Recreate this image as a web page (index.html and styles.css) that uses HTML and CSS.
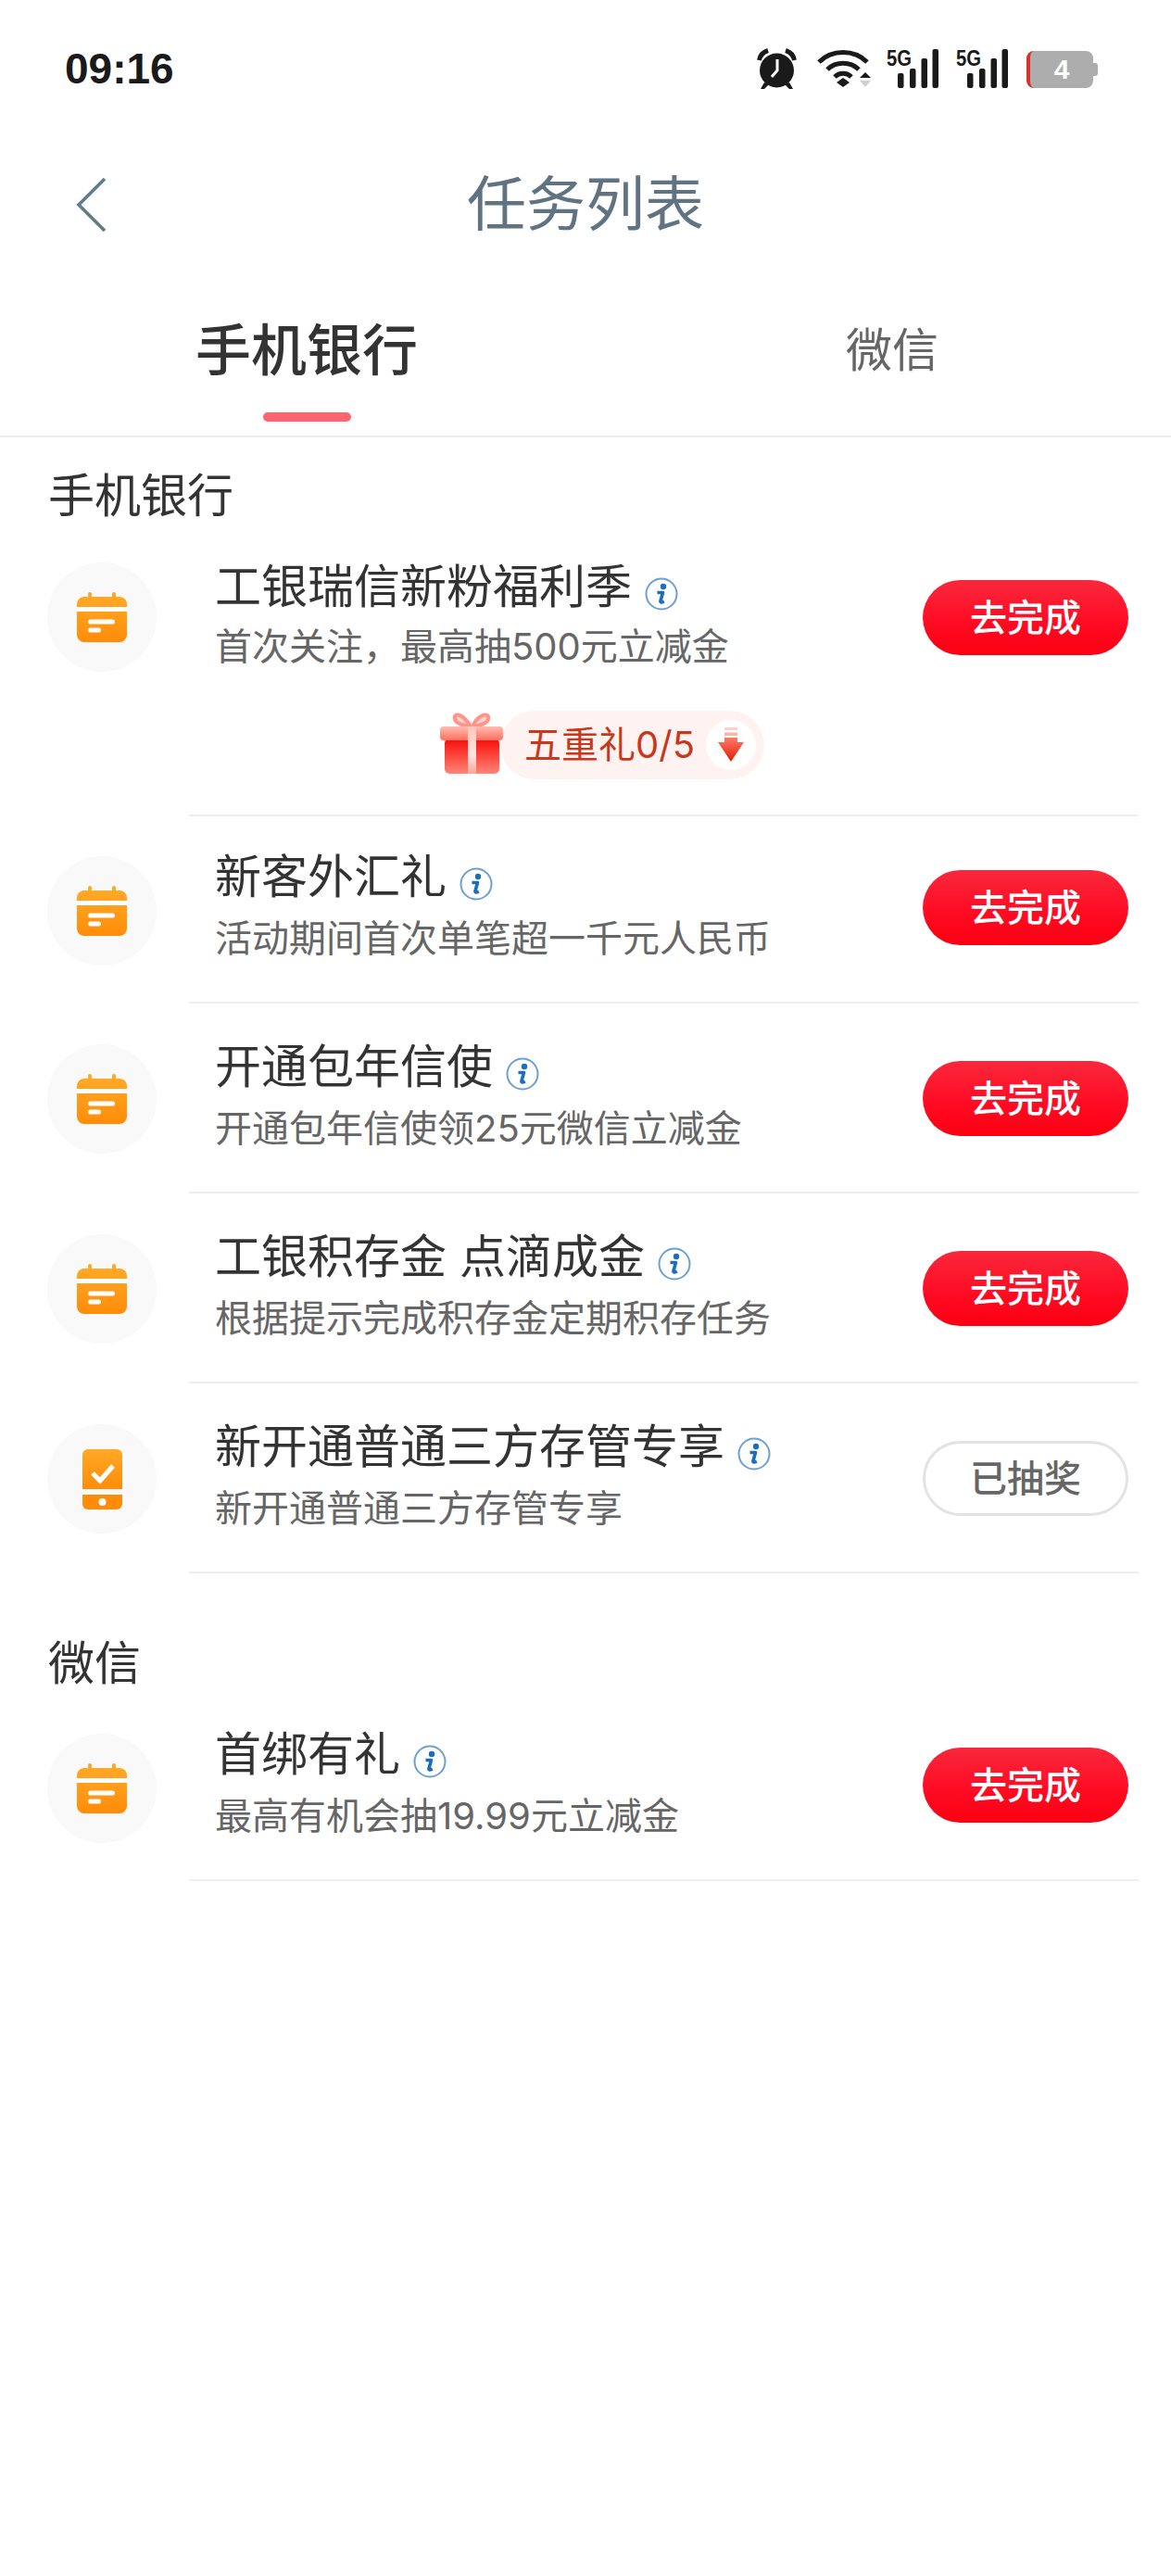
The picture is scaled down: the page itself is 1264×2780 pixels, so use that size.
FILE: index.html
```html
<!DOCTYPE html>
<html lang="zh-CN">
<head>
    <meta charset="UTF-8">
    <meta name="viewport" content="width=device-width, initial-scale=1.0">
    <title>任务列表</title>
    <link rel="stylesheet" href="styles.css">
</head>
<body>
    <!-- shared icons -->
    <svg class="defs" width="0" height="0" aria-hidden="true">
        <defs>
            <linearGradient id="orange" x1="0" y1="0" x2="0" y2="1">
                <stop offset="0" stop-color="#ffa927"/>
                <stop offset="1" stop-color="#ff8c08"/>
            </linearGradient>
            <linearGradient id="giftRed" x1="0" y1="0" x2="0" y2="1">
                <stop offset="0" stop-color="#f80c08"/>
                <stop offset="1" stop-color="#ff8576"/>
            </linearGradient>
            <linearGradient id="giftLid" x1="0" y1="0" x2="0" y2="1">
                <stop offset="0" stop-color="#ffbcb0"/>
                <stop offset="1" stop-color="#ff6f60"/>
            </linearGradient>
            <linearGradient id="giftRibbon" x1="0" y1="0" x2="0" y2="1">
                <stop offset="0" stop-color="#ffc4ba"/>
                <stop offset="0.6" stop-color="#ffe6e1"/>
                <stop offset="1" stop-color="#ffa497"/>
            </linearGradient>
            <linearGradient id="arrowRed" x1="0" y1="0" x2="0" y2="1">
                <stop offset="0" stop-color="#ff7a64"/>
                <stop offset="1" stop-color="#e01c06"/>
            </linearGradient>
            <symbol id="calendar" viewBox="0 0 54 54">
                <rect x="12" y="0" width="4" height="8" rx="2" fill="#ffa927"/>
                <rect x="38" y="0" width="4" height="8" rx="2" fill="#ffa927"/>
                <rect x="0" y="5" width="54" height="49" rx="8" fill="url(#orange)"/>
                <rect x="0" y="16" width="54" height="5" fill="#fff"/>
                <rect x="12" y="29.5" width="29" height="5" rx="2.5" fill="#fff"/>
                <rect x="12" y="38.5" width="14" height="5" rx="2.5" fill="#fff"/>
            </symbol>
            <symbol id="phone" viewBox="0 0 43 65">
                <path d="M6 0h31a6 6 0 0 1 6 6v37H0V6a6 6 0 0 1 6-6z" fill="url(#orange)"/>
                <path d="M0 49h43v10a6 6 0 0 1-6 6H6a6 6 0 0 1-6-6z" fill="#ff8c08"/>
                <circle cx="21.5" cy="57" r="4" fill="#fff"/>
                <polyline points="11,26 19,34 33,18" fill="none" stroke="#fff" stroke-width="5"/>
            </symbol>
            <symbol id="info" viewBox="0 0 36 36">
                <circle cx="18" cy="18" r="16.5" fill="none" stroke="#6c9fd2" stroke-width="2"/>
                <circle cx="20" cy="10" r="3.2" fill="#1b6dbd"/>
                <path d="M13.5 16.5h6L17 25.5c-.4 1.6.6 2 3.8.6" fill="none" stroke="#1b6dbd" stroke-width="3.6" stroke-linejoin="round"/>
            </symbol>
            <symbol id="signal" viewBox="0 0 56 42">
                <text class="net-label" x="0" y="18" textLength="27" lengthAdjust="spacingAndGlyphs">5G</text>
                <rect x="12" y="26" width="6.5" height="16" rx="2"/>
                <rect x="25" y="21" width="6.5" height="21" rx="2"/>
                <rect x="37.5" y="10" width="6.5" height="32" rx="2"/>
                <rect x="49.5" y="0" width="6.5" height="42" rx="2"/>
            </symbol>
        </defs>
    </svg>

    <div class="status-bar">
        <span class="clock">09:16</span>
        <div class="status-icons">
            <svg class="ic-alarm" width="43" height="44" viewBox="0 0 43 44">
                <g fill="none" stroke="#1a1a1a" stroke-width="5">
                    <path d="M2.5 13 Q4 5 12 2.5"/>
                    <path d="M40.5 13 Q39 5 31 2.5"/>
                </g>
                <circle cx="21.5" cy="24" r="18.5" fill="#1a1a1a"/>
                <path d="M8 37l-4 7h4l5-5zM35 37l4 7h-4l-5-5z" fill="#1a1a1a"/>
                <polyline points="22,12 22,24 16,31" fill="none" stroke="#fff" stroke-width="3"/>
            </svg>
            <svg class="ic-wifi" width="59" height="42" viewBox="0 0 59 42">
                <g fill="none" stroke="#1a1a1a" stroke-width="5">
                    <path d="M3 14 C17 0 41 0 55 14"/>
                    <path d="M12 22 C21 13 37 13 46 22"/>
                    <path d="M20 30 C25 25 33 25 38 30"/>
                </g>
                <path d="M29 31l7 5-7 5-7-5z" fill="#1a1a1a"/>
                <path d="M53 25l6 6H47z" fill="#1a1a1a"/>
                <path d="M47 34h12l-6 7z" fill="#cfcfcf"/>
            </svg>
            <svg class="ic-signal" width="56" height="42"><use href="#signal"/></svg>
            <svg class="ic-signal ic-signal-2" width="56" height="42"><use href="#signal"/></svg>
            <div class="battery"><span class="battery-level">4</span></div>
        </div>
    </div>

    <div class="nav-bar">
        <a class="back" href="#">
            <svg width="33" height="60" viewBox="0 0 33 60">
                <polyline points="31,2 3,30 31,58" fill="none" stroke="#5f7c8c" stroke-width="3.6"/>
            </svg>
        </a>
        <h1 class="nav-title">任务列表</h1>
    </div>

    <div class="tabs">
        <div class="tab active">手机银行</div>
        <div class="tab">微信</div>
    </div>

    <h2 class="section-title">手机银行</h2>

    <div class="task task-gift">
        <div class="task-icon"><svg class="cal"><use href="#calendar"/></svg></div>
        <div class="task-body">
            <div class="task-main">
                <div class="task-text">
                    <div class="task-name">工银瑞信新粉福利季<svg class="info"><use href="#info"/></svg></div>
                    <div class="task-desc">首次关注，最高抽500元立减金</div>
                </div>
                <button class="task-btn">去完成</button>
            </div>
            <div class="gift-row">
                <svg class="gift" width="68" height="68" viewBox="0 0 68 68">
                    <g fill="#ffd2ca" stroke="#ff9488" stroke-width="4">
                        <path d="M33 17 C24 2 14 2 16 9 C17 14 26 16 33 17"/>
                        <path d="M35 17 C42 2 54 2 52 9 C51 14 42 16 35 17"/>
                    </g>
                    <rect x="5" y="30" width="59" height="38" rx="5" fill="url(#giftRed)"/>
                    <rect x="0" y="17" width="68" height="15" rx="4" fill="url(#giftLid)"/>
                    <rect x="30" y="17" width="9" height="51" fill="url(#giftRibbon)"/>
                </svg>
                <div class="gift-pill">
                    <span class="gift-text">五重礼0/5</span>
                    <span class="gift-arrow">
                        <svg width="28" height="38" viewBox="0 0 28 38">
                            <rect x="7" y="0" width="14" height="3" fill="#ffd0c6"/>
                            <rect x="7" y="5.5" width="14" height="3.5" fill="#ffb3a4"/>
                            <path d="M7 11h14v5h7L14 37 0 16h7z" fill="url(#arrowRed)"/>
                        </svg>
                    </span>
                </div>
            </div>
        </div>
    </div>

    <div class="task task-tight">
        <div class="task-icon"><svg class="cal"><use href="#calendar"/></svg></div>
        <div class="task-body">
            <div class="task-main">
                <div class="task-text">
                    <div class="task-name">新客外汇礼<svg class="info"><use href="#info"/></svg></div>
                    <div class="task-desc">活动期间首次单笔超一千元人民币</div>
                </div>
                <button class="task-btn">去完成</button>
            </div>
        </div>
    </div>

    <div class="task">
        <div class="task-icon"><svg class="cal"><use href="#calendar"/></svg></div>
        <div class="task-body">
            <div class="task-main">
                <div class="task-text">
                    <div class="task-name">开通包年信使<svg class="info"><use href="#info"/></svg></div>
                    <div class="task-desc">开通包年信使领25元微信立减金</div>
                </div>
                <button class="task-btn">去完成</button>
            </div>
        </div>
    </div>

    <div class="task">
        <div class="task-icon"><svg class="cal"><use href="#calendar"/></svg></div>
        <div class="task-body">
            <div class="task-main">
                <div class="task-text">
                    <div class="task-name">工银积存金 点滴成金<svg class="info"><use href="#info"/></svg></div>
                    <div class="task-desc">根据提示完成积存金定期积存任务</div>
                </div>
                <button class="task-btn">去完成</button>
            </div>
        </div>
    </div>

    <div class="task">
        <div class="task-icon"><svg class="mobile"><use href="#phone"/></svg></div>
        <div class="task-body">
            <div class="task-main">
                <div class="task-text">
                    <div class="task-name">新开通普通三方存管专享<svg class="info"><use href="#info"/></svg></div>
                    <div class="task-desc">新开通普通三方存管专享</div>
                </div>
                <button class="task-btn done">已抽奖</button>
            </div>
        </div>
    </div>

    <h2 class="section-title section-next">微信</h2>

    <div class="task task-tight">
        <div class="task-icon"><svg class="cal"><use href="#calendar"/></svg></div>
        <div class="task-body">
            <div class="task-main">
                <div class="task-text">
                    <div class="task-name">首绑有礼<svg class="info"><use href="#info"/></svg></div>
                    <div class="task-desc">最高有机会抽19.99元立减金</div>
                </div>
                <button class="task-btn">去完成</button>
            </div>
        </div>
    </div>
</body>
</html>
```

FILE: styles.css
```css
* {
    box-sizing: border-box;
}
body {
    margin: 0;
    min-height: 2780px;
    background: #fff;
    color: #333;
    font-family: Inter, "Noto Sans CJK SC", sans-serif;
}
.defs {
    position: absolute;
}

/* status bar */
.status-bar {
    display: flex;
    justify-content: space-between;
    align-items: flex-start;
    height: 140px;
    padding: 52px 79px 0 70px;
    font-family: "Liberation Sans", sans-serif;
}
.clock {
    font-size: 46px;
    line-height: 44px;
    font-weight: bold;
    color: #1a1a1a;
}
.status-icons {
    display: flex;
    align-items: flex-start;
}
.ic-wifi {
    margin: 1px 0 0 21px;
}
.ic-signal {
    margin: 1px 0 0 17px;
    fill: #1a1a1a;
}
.ic-signal-2 {
    margin-left: 19px;
}
.net-label {
    font-family: "Liberation Sans", sans-serif;
    font-size: 24px;
    font-weight: bold;
    fill: #1a1a1a;
}
.battery {
    position: relative;
    width: 72px;
    height: 40px;
    margin: 3px 5px 0 20px;
    background: #adadad;
    border-left: 4px solid #d8322a;
    border-radius: 8px;
    text-align: center;
}
.battery::after {
    content: "";
    position: absolute;
    right: -5px;
    top: 13px;
    width: 5px;
    height: 14px;
    background: #adadad;
    border-radius: 0 3px 3px 0;
}
.battery-level {
    font-size: 30px;
    line-height: 40px;
    font-weight: bold;
    color: #fff;
}

/* title row */
.nav-bar {
    display: flex;
    justify-content: center;
    align-items: center;
    position: relative;
    height: 156px;
    padding-top: 3px;
}
.back {
    position: absolute;
    left: 82px;
    top: 51px;
}
.nav-title {
    margin: 0;
    font-size: 64px;
    line-height: 80px;
    font-weight: normal;
    color: #5f7382;
}

/* tabs */
.tabs {
    display: flex;
    gap: 462px;
    height: 176px;
    padding: 42px 0 0 211px;
    border-bottom: 2px solid #eee;
}
.tab {
    font-size: 50px;
    line-height: 80px;
    color: #666;
}
.tab.active {
    font-size: 60px;
    font-weight: 500;
    color: #333;
}
.tab.active::after {
    content: "";
    display: block;
    width: 95px;
    height: 10px;
    margin: 27px auto 0;
    background: #ff6370;
    border-radius: 5px;
}

/* section headings */
.section-title {
    margin: 38px 0 10px 52px;
    font-size: 50px;
    line-height: 50px;
    font-weight: normal;
    color: #333;
}
.section-next {
    margin: 72px 0 8px 52px;
}

/* task rows */
.task {
    display: flex;
    align-items: flex-start;
    padding: 0 35px 0 51px;
}
.task-icon {
    display: flex;
    justify-content: center;
    align-items: center;
    flex: none;
    width: 118px;
    height: 118px;
    margin: 44px 35px 0 0;
    background: #f9f9f9;
    border-radius: 50%;
}
.cal {
    width: 54px;
    height: 54px;
}
.mobile {
    width: 43px;
    height: 65px;
}
.task-body {
    flex: 1;
    padding-left: 28px;
    border-bottom: 2px solid #eee;
}
.task-main {
    display: flex;
    justify-content: space-between;
    align-items: flex-start;
    padding-right: 11px;
}
.task-text {
    padding: 43px 0 43px;
}
.task-name {
    display: flex;
    align-items: flex-start;
    height: 50px;
    font-size: 50px;
    line-height: 50px;
    color: #333;
}
.info {
    width: 36px;
    height: 36px;
    margin: 15px 0 0 14px;
}
.task-desc {
    margin-top: 17px;
    font-size: 40px;
    line-height: 50px;
    color: #666;
}
.task-btn {
    width: 222px;
    height: 81px;
    margin-top: 62px;
    padding: 0 0 5px;
    border: none;
    border-radius: 41px;
    background: linear-gradient(180deg, #f9283c, #ff0a22 60%, #fa0012);
    color: #fff;
    font-family: inherit;
    font-size: 40px;
    font-weight: 500;
}
.task-btn.done {
    border: 3px solid #e3e3e3;
    background: #fff;
    color: #666;
}

/* shorter rows: first after the banner row and the one under 微信 */
.task-tight .task-icon {
    margin-top: 43px;
}
.task-tight .task-text {
    padding-top: 40px;
}
.task-tight .task-btn {
    margin-top: 58px;
}

/* first row carries the gift banner */
.task-gift .task-icon {
    margin-top: 37px;
}
.task-gift .task-text {
    padding: 38px 0 0;
}
.task-gift .task-desc {
    margin-top: 15px;
}
.task-gift .task-btn {
    margin-top: 56px;
}
.gift-row {
    display: flex;
    align-items: flex-start;
    margin-top: 44px;
    padding: 0 0 38px 243px;
}
.gift {
    position: relative;
    flex: none;
}
.gift-pill {
    display: flex;
    align-items: center;
    height: 74px;
    margin-left: -3px;
    padding: 0 9px 0 26px;
    background: #fff3f1;
    border-radius: 37px;
}
.gift-text {
    font-size: 40px;
    line-height: 50px;
    color: #c8381c;
}
.gift-arrow {
    display: flex;
    justify-content: center;
    align-items: center;
    width: 54px;
    height: 54px;
    margin-left: 12px;
    background: #fff;
    border-radius: 50%;
}
```
